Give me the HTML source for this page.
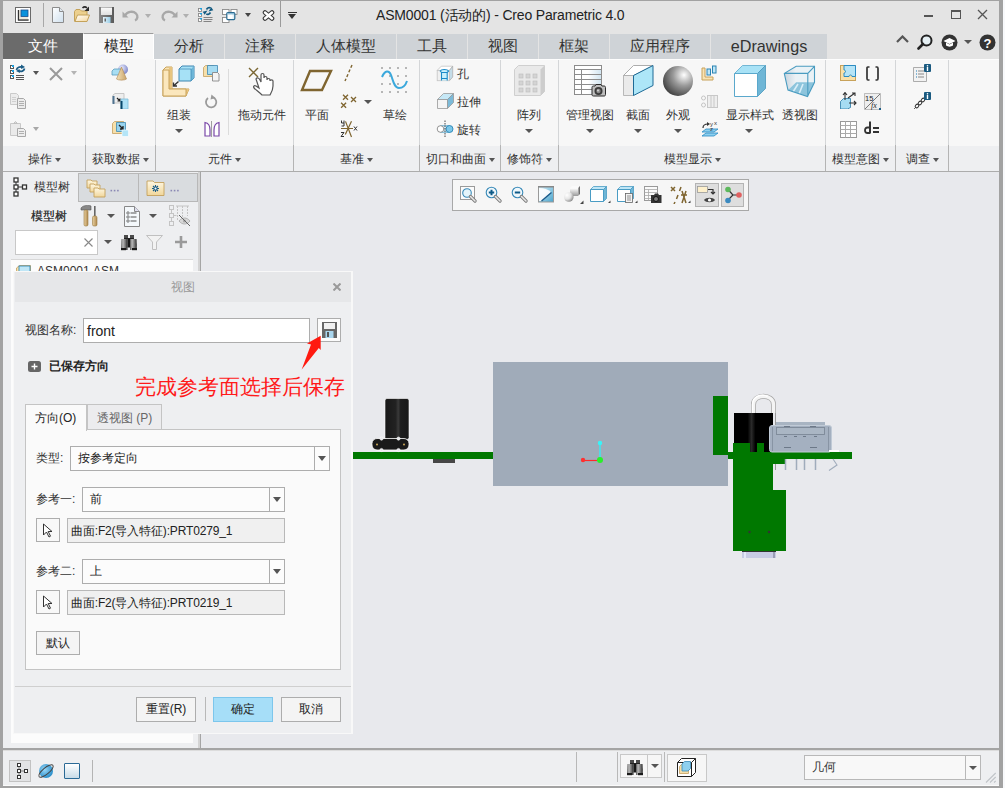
<!DOCTYPE html>
<html><head><meta charset="utf-8">
<style>
*{box-sizing:border-box;margin:0;padding:0}
html,body{width:1005px;height:788px;overflow:hidden;background:#f8f9fb;font-family:"Liberation Sans",sans-serif;font-size:13px;color:#222}
.a{position:absolute}
#frame{position:absolute;left:0;top:0;width:1003px;height:788px;background:#a2a2a2}
#title{left:3px;top:1px;width:996px;height:58px;background:#e4e4e4}
#tabs{left:0;top:0;width:0;height:0}
.tab{position:absolute;top:34px;height:25px;background:#cfd3d7;text-align:center;font-size:15px;line-height:24px;color:#333;border-right:1px solid #e4e4e4}
#ribbon{left:3px;top:59px;width:996px;height:112px;background:#f7f7f7}
#rlabels{left:3px;top:146px;width:996px;height:25px;background:#eeeff1}
.gsep{position:absolute;top:60px;width:1px;height:111px;background:linear-gradient(#d4d6d8 0,#d4d6d8 77%,#b4b4b4 77%,#b4b4b4 100%)}
.glab{position:absolute;top:147px;height:25px;line-height:24px;font-size:12px;color:#333;text-align:center}
.arr{display:inline-block;width:0;height:0;border-left:3.5px solid transparent;border-right:3.5px solid transparent;border-top:4px solid #555;vertical-align:middle;margin-left:3px}
.rl{position:absolute;font-size:12.5px;color:#333;white-space:nowrap}
#panel{left:3px;top:172px;width:195px;height:576px;background:#eeeff1}
#gfx{left:201px;top:172px;width:798px;height:576px;background:#e8e9ed}
#status{left:3px;top:751px;width:996px;height:35px;background:#eeeff1}
#dlg{left:13px;top:271px;width:340px;height:463px;background:#eeeff1;border:1px solid #f8f8f8;border-right-width:2px}

.inp{position:absolute;background:#fff;border:1px solid #adadad}
.sel{position:absolute;background:#fcfcfc;border:1px solid #adadad}
.sel .dd{position:absolute;right:0;top:0;width:15px;height:100%;border-left:1px solid #adadad}
.sel .dd:after{content:"";position:absolute;left:3px;top:9px;border-left:4px solid transparent;border-right:4px solid transparent;border-top:5px solid #555}
.btn{position:absolute;background:#f4f4f4;border:1px solid #adadad;text-align:center;font-size:12px;line-height:22px;color:#222}
.dl{position:absolute;font-size:12px;color:#333;white-space:nowrap}
</style></head><body>
<div id="frame"></div>
<div id="title" class="a"></div><div class="a" style="left:0;top:0">
 <svg class="a" style="left:15px;top:7px" width="16" height="16" viewBox="0 0 16 16"><rect x="0.5" y="0.5" width="15" height="15" fill="#fff" stroke="#6a6a6a"/><path d="M3.5 3v10h10" fill="none" stroke="#333" stroke-width="1.2"/><rect x="4" y="3" width="9" height="9.5" fill="#ece8de"/><rect x="6" y="3" width="7" height="6.5" fill="#0a92dc" stroke="#1a4c8a" stroke-width="0.8"/><path d="M3.5 3v10h10" fill="none" stroke="#333" stroke-width="1.2"/></svg>
 <div class="a" style="left:43px;top:3px;width:1px;height:24px;background:#a8a8a8"></div>
 <svg class="a" style="left:49px;top:6px" width="16" height="17" viewBox="0 0 16 17"><defs><linearGradient id="gdoc" x1="0" y1="0" x2="1" y2="1"><stop offset="0" stop-color="#fff"/><stop offset="1" stop-color="#cfe0ee"/></linearGradient></defs><path d="M3.5 1.5h7l4 4v11h-11z" fill="url(#gdoc)" stroke="#8c8c8c"/><path d="M10.5 1.5v4h4" fill="#dfe8f0" stroke="#8c8c8c"/></svg>
 <svg class="a" style="left:70px;top:3px" width="24" height="22" viewBox="70 3 24 22"><defs><linearGradient id="gflap" x1="0" y1="0" x2="1" y2="1"><stop offset="0" stop-color="#fff"/><stop offset="1" stop-color="#f4d69a"/></linearGradient></defs>
<path d="M74.5 21.5V11.5l1.5-2h4l1.5 1.5h5.5v4" fill="#ecd08e" stroke="#c4a25a" stroke-width="1"/>
<path d="M75 21.5l2.5-6.5h12l-2.5 6.5z" fill="url(#gflap)" stroke="#c4a25a" stroke-width="1"/>
<path d="M82.5 8c1.5-1.5 3-1.5 4.5 0" fill="none" stroke="#2a2a2a" stroke-width="1.6"/>
<path d="M89 6.5v4.5h-4.5z" fill="#2a2a2a"/></svg>
 <svg class="a" style="left:98px;top:6px" width="17" height="18" viewBox="98 6 17 18"><defs><linearGradient id="gsvf" x1="0" x2="1"><stop offset="0" stop-color="#8a8a8a"/><stop offset="1" stop-color="#5a5a5a"/></linearGradient><linearGradient id="gsvl" x1="0" y1="0" x2="0" y2="1"><stop offset="0" stop-color="#fafafa"/><stop offset="1" stop-color="#e0e0e0"/></linearGradient><linearGradient id="gsvs" x1="0" x2="1"><stop offset="0" stop-color="#e8f4fa"/><stop offset="1" stop-color="#98cce6"/></linearGradient></defs>
<rect x="99" y="7" width="15" height="16" fill="url(#gsvf)"/>
<rect x="101" y="7.5" width="11" height="7.5" fill="url(#gsvl)"/>
<rect x="103" y="17" width="7.5" height="6" fill="url(#gsvs)"/>
<rect x="104.5" y="18.5" width="1.5" height="3" fill="#666"/></svg>
 <svg class="a" style="left:122px;top:9px" width="18" height="13" viewBox="0 0 18 13"><path d="M3 6.5c2-4 8-5 11-2 2.5 2.5 1.5 6-1 7" fill="none" stroke="#a8a8a8" stroke-width="2.4"/><path d="M0.5 2.5v6h6z" fill="#a8a8a8"/></svg>
 <div class="a arr" style="left:145px;top:14px;border-top-color:#b0b0b0;margin:0"></div>
 <svg class="a" style="left:160px;top:9px" width="18" height="13" viewBox="0 0 18 13"><path d="M15 6.5c-2-4-8-5-11-2-2.5 2.5-1.5 6 1 7" fill="none" stroke="#a8a8a8" stroke-width="2.4"/><path d="M17.5 2.5v6h-6z" fill="#a8a8a8"/></svg>
 <div class="a arr" style="left:183px;top:14px;border-top-color:#b0b0b0;margin:0"></div>
 <svg class="a" style="left:194px;top:4px" width="22" height="22" viewBox="194 4 22 22"><g fill="#fff" stroke="#8a8a8a" stroke-width="0.9"><rect x="198.5" y="8.5" width="3" height="3"/><rect x="198.5" y="13.5" width="3" height="3"/><rect x="198.5" y="18.5" width="3" height="3"/></g><g fill="#1aa0e0"><rect x="200" y="8" width="2" height="1.5"/><rect x="200" y="13" width="2" height="1.5"/><rect x="200" y="18" width="2" height="1.5"/></g>
<path d="M203.5 17.5h9M203.5 19.5h9M203.5 21.5h8" stroke="#777" stroke-width="0.9"/>
<path d="M206.5 9.5c1-1.8 2.8-2.3 4.2-1.5" fill="none" stroke="#125a80" stroke-width="1.6"/><path d="M213.3 10.2l-4.8 1.3 2.8-4.3z" fill="#125a80"/>
<path d="M210.5 12.5c-1 1.8-2.8 2.3-4.2 1.5" fill="none" stroke="#125a80" stroke-width="1.6"/><path d="M202.7 11.8l4.8-1.3-2.8 4.3z" fill="#125a80"/></svg>
 <svg class="a" style="left:220px;top:6px" width="20" height="19" viewBox="220 6 20 19"><defs><linearGradient id="gwin" x1="0" x2="1"><stop offset="0" stop-color="#fff"/><stop offset="0.6" stop-color="#fff"/><stop offset="1" stop-color="#cfe6f2"/></linearGradient></defs><g fill="#fff" stroke="#8a8a8a" stroke-width="0.9"><rect x="222.5" y="9.5" width="6.5" height="5"/><rect x="231" y="9.5" width="6" height="5"/><rect x="222.5" y="17.5" width="6.5" height="5"/></g><rect x="226.8" y="12.6" width="8" height="7" rx="1" fill="url(#gwin)" stroke="#2a6a90" stroke-width="1.2"/><rect x="227.4" y="13.2" width="6.8" height="1.2" fill="#7ab4d4"/></svg>
 <div class="a arr" style="left:245px;top:13px;margin:0;border-top-color:#444"></div>
 <svg class="a" style="left:262px;top:10px" width="13" height="11" viewBox="0 0 13 11"><path d="M3 2.5l7 6M10 2.5l-7 6" stroke="#3a3a3a" stroke-width="4.6" stroke-linecap="round"/><path d="M3 2.5l7 6M10 2.5l-7 6" stroke="#fff" stroke-width="2.4" stroke-linecap="round"/></svg>
 <div class="a" style="left:280px;top:1px;width:1px;height:26px;background:#9a9a9a"></div>
 <div class="a" style="left:288px;top:12px;width:9px;height:1px;background:#333"></div>
 <div class="a arr" style="left:288px;top:14px;margin:0;border-top-color:#333;border-left-width:4.5px;border-right-width:4.5px;border-top-width:5px"></div>
 <div class="a" id="ttl" style="left:376px;top:7px;font-size:14px;letter-spacing:-0.17px;color:#222;white-space:nowrap">ASM0001 (活动的) - Creo Parametric 4.0</div>
 <div class="a" style="left:924px;top:15px;width:9px;height:2px;background:#555"></div>
 <div class="a" style="left:951px;top:10px;width:10px;height:9px;border:1px solid #555;border-top-width:2px"></div>
 <svg class="a" style="left:977px;top:9px" width="11" height="11" viewBox="0 0 11 11"><path d="M1 1l9 9M10 1L1 10" stroke="#555" stroke-width="1.3"/></svg>
</div>
<div id="tabs" class="a">
  <div class="tab" style="left:3px;width:80px;top:33px;height:26px;line-height:25px;background:#6b6b6b;color:#fff;border:none">文件</div>
  <div class="tab" style="left:83px;width:71px;background:#f8f8f8;color:#222;border-top:1px solid #9c9c9c;top:33px;height:26px;border-left:1px solid #fff;border-right:1px solid #fff">模型</div>
  <div class="tab" style="left:154px;width:71px;">分析</div>
  <div class="tab" style="left:225px;width:71px;">注释</div>
  <div class="tab" style="left:296px;width:101px;">人体模型</div>
  <div class="tab" style="left:397px;width:71px;">工具</div>
  <div class="tab" style="left:468px;width:71px;">视图</div>
  <div class="tab" style="left:539px;width:71px;">框架</div>
  <div class="tab" style="left:610px;width:101px;">应用程序</div>
  <div class="tab" style="left:711px;width:117px;font-size:16.2px">eDrawings</div>
</div>
<!-- tabbar right icons -->
<svg class="a" style="left:896px;top:35px" width="13" height="8" viewBox="0 0 13 8"><path d="M1 7l5.5-5.5L12 7" fill="none" stroke="#555" stroke-width="2.2"/></svg>
<svg class="a" style="left:917px;top:34px" width="16" height="16" viewBox="0 0 16 16"><circle cx="9.5" cy="6.5" r="5" fill="#e6f0f4" stroke="#222" stroke-width="2"/><path d="M6 10l-4.5 4.5" stroke="#222" stroke-width="2.6" stroke-linecap="round"/></svg>
<svg class="a" style="left:941px;top:34px" width="17" height="17" viewBox="0 0 17 17"><circle cx="8.5" cy="8.5" r="8" fill="#333"/><path d="M2.5 7l6-3 6 3-6 3z" fill="#fff"/><path d="M5 8.5v3c2 1.5 5 1.5 7 0v-3l-3.5 2z" fill="#fff"/></svg>
<div class="a arr" style="left:964px;top:40px;margin:0;border-left-width:4px;border-right-width:4px;border-top:4px solid #555"></div>
<svg class="a" style="left:979px;top:34px" width="17" height="17" viewBox="0 0 17 17"><circle cx="8.5" cy="8.5" r="8" fill="#333"/><text x="8.5" y="13.5" text-anchor="middle" font-size="13" font-weight="bold" fill="#fff" font-family="Liberation Sans">?</text></svg>
<div id="ribbon" class="a"></div>
<div id="rlabels" class="a"></div>
<div class="a" style="left:3px;top:171px;width:996px;height:2px;background:#acacac"></div>
<div class="a" style="left:3px;top:59px;width:80px;height:1px;background:#fff"></div>
<div class="a" style="left:154px;top:59px;width:845px;height:1px;background:#fdfdfd"></div>
<div class="gsep" style="left:85px"></div>
<div class="gsep" style="left:155px"></div>
<div class="gsep" style="left:293px"></div>
<div class="gsep" style="left:419px"></div>
<div class="gsep" style="left:500px"></div>
<div class="gsep" style="left:558px"></div>
<div class="gsep" style="left:825px"></div>
<div class="gsep" style="left:895px"></div>
<div class="gsep" style="left:948px"></div>
<div class="a" style="left:228px;top:69px;width:1px;height:66px;background:#dcdcdc"></div>
<div class="glab" style="left:3px;width:82px">操作<span class="arr"></span></div>
<div class="glab" style="left:86px;width:69px">获取数据<span class="arr"></span></div>
<div class="glab" style="left:156px;width:137px">元件<span class="arr"></span></div>
<div class="glab" style="left:294px;width:125px">基准<span class="arr"></span></div>
<div class="glab" style="left:420px;width:80px">切口和曲面<span class="arr"></span></div>
<div class="glab" style="left:501px;width:57px">修饰符<span class="arr"></span></div>
<div class="glab" style="left:559px;width:266px">模型显示<span class="arr"></span></div>
<div class="glab" style="left:826px;width:69px">模型意图<span class="arr"></span></div>
<div class="glab" style="left:896px;width:52px">调查<span class="arr"></span></div>
<!-- group 操作 -->
<svg class="a" style="left:10px;top:64px" width="17" height="17" viewBox="0 0 17 17"><g fill="#fff" stroke="#555" stroke-width="1"><rect x="0.5" y="1.5" width="3" height="3"/><rect x="0.5" y="6.5" width="3" height="3"/><rect x="0.5" y="11.5" width="3" height="3"/></g><g fill="#1aa0e0"><rect x="2" y="1" width="2" height="2"/><rect x="2" y="6" width="2" height="2"/><rect x="2" y="11" width="2" height="2"/></g><path d="M6 11.5h8M6 13.5h8M6 15.5h8" stroke="#555" stroke-width="1"/><path d="M6.5 6c0.5-2.5 3.5-4 6-2.5" fill="none" stroke="#1a5c86" stroke-width="1.8"/><path d="M11 0.5l4 2.5-3.8 2z" fill="#1a5c86"/><path d="M14.5 4.5c-0.5 2.5-3.5 3.5-5.5 2.3" fill="none" stroke="#1a5c86" stroke-width="1.8"/><path d="M10 9l-4-2 3.5-2z" fill="#1a5c86"/></svg>
<div class="a arr" style="left:33px;top:71px;margin:0;border-left-width:3.5px;border-right-width:3.5px;border-top:4px solid #555"></div>
<svg class="a" style="left:48px;top:66px" width="16" height="16" viewBox="0 0 16 16"><path d="M2 2l12 12M14 2L2 14" stroke="#9a9a9a" stroke-width="2"/></svg>
<div class="a arr" style="left:71px;top:71px;margin:0;border-left-width:3.5px;border-right-width:3.5px;border-top:4px solid #b4b4b4"></div>
<svg class="a" style="left:10px;top:93px" width="17" height="17" viewBox="0 0 17 17"><path d="M0.5 0.5h6l2 2v9h-8z" fill="#ececec" stroke="#cacaca"/><path d="M2 4.5h4M2 6.5h4M2 8.5h4" stroke="#d0d0d0"/><path d="M7.5 5.5h6l2 2v8h-8z" fill="#ececec" stroke="#a8a8a8"/><path d="M9 8.5h5M9 10.5h5M9 12.5h5" stroke="#b0b0b0"/></svg>
<svg class="a" style="left:10px;top:121px" width="17" height="17" viewBox="0 0 17 17"><path d="M0.5 2.5h10v12h-10z" fill="#eaeaea" stroke="#c8c8c8"/><path d="M3.5 2.5l2-2 2 2z" fill="#ddd" stroke="#c0c0c0"/><path d="M7.5 7.5h6l2 2v6h-8z" fill="#eee" stroke="#a8a8a8"/><path d="M9 10.5h5M9 12.5h5" stroke="#b0b0b0"/></svg>
<div class="a arr" style="left:33px;top:127px;margin:0;border-left-width:3.5px;border-right-width:3.5px;border-top:4px solid #a8a8a8"></div>
<!-- group 获取数据 -->
<svg class="a" style="left:111px;top:64px" width="18" height="17" viewBox="0 0 18 17"><defs><radialGradient id="gsph" cx="0.35" cy="0.35" r="0.7"><stop offset="0" stop-color="#eef0ff"/><stop offset="1" stop-color="#7d86c8"/></radialGradient><linearGradient id="gcone" x1="0" x2="1"><stop offset="0" stop-color="#f5e2b8"/><stop offset="1" stop-color="#c9a46a"/></linearGradient></defs><circle cx="12" cy="5.5" r="5" fill="url(#gsph)"/><path d="M1 7l2-2h8v6H1z" fill="#a8def3" stroke="#5a9dbd" stroke-width="0.8"/><path d="M10.5 3l-5 12c2 1.5 8 1.5 10 0z" fill="url(#gcone)" stroke="#b08850" stroke-width="0.6"/></svg>
<svg class="a" style="left:112px;top:93px" width="17" height="16" viewBox="0 0 17 16"><path d="M1 2l2-1.5h9v9.5h-11z" fill="#eee" stroke="#bbb" stroke-width="0.8"/><rect x="0.5" y="3" width="2" height="8" fill="#4f7390"/><path d="M5 5l3 3M8 5.5v2.5h-2.5" stroke="#222" stroke-width="1.2" fill="none"/><path d="M9 6h7v10H9z" fill="#aee0f5" stroke="#7dbcd8" stroke-width="0.8"/><rect x="8.5" y="8" width="2" height="8" fill="#07466a"/></svg>
<svg class="a" style="left:112px;top:121px" width="17" height="16" viewBox="0 0 17 16"><path d="M0.5 2.5l2-2h9v12h-11z" fill="#f6dfaa" stroke="#c4a060" stroke-width="0.8"/><path d="M4.5 1.5h9v9h-9z" fill="#98d3ee" stroke="#3f8ab0" stroke-width="0.8"/><path d="M7 4l4 4M11 5v3H8" stroke="#222" stroke-width="1.3" fill="none"/><path d="M10 9h6.5v6.5H10z" fill="#b5e5f7" stroke="#fff" stroke-width="0.6"/></svg>

<!-- group 元件 -->
<svg class="a" style="left:162px;top:65px" width="33" height="33" viewBox="0 0 33 33"><path d="M1 5l3-3h6v22h17l-3 7H1z" fill="#f9e3b4" stroke="#c8a25a" stroke-width="1"/><path d="M7 2l3 0v22l-3 3z" fill="#e8c47e"/><path d="M24 24h3l-3 7z" fill="#e8c47e"/><path d="M1 5h6v19h17v7H1z" fill="#fbe7bd" stroke="#c8a25a" stroke-width="1"/><path d="M17 4l3-3h12v12l-3 3H17z" fill="#a6e1f6" stroke="#3e86b2" stroke-width="1"/><path d="M29 4l3-3v12l-3 3z" fill="#6eb6d8"/><path d="M17 4h12v12" fill="none" stroke="#3e86b2" stroke-width="0.7"/><path d="M16.5 16.5l-5 4.5M11.5 17.5v3.5h3.5" stroke="#333" stroke-width="1.4" fill="none"/></svg>
<div class="rl" style="left:167px;top:107px;font-size:12px">组装</div>
<div class="a arr" style="left:175px;top:129px;margin:0;border-left-width:4px;border-right-width:4px;border-top:4px solid #555"></div>
<svg class="a" style="left:203px;top:65px" width="17" height="17" viewBox="0 0 17 17"><path d="M0.5 2.5l2-2h8v11h-10z" fill="#f6dfaa" stroke="#c4a060" stroke-width="0.8"/><path d="M4.5 0.5h10v9h-10z" fill="#a6dcf2" stroke="#3e86b2" stroke-width="0.8"/><path d="M9.5 7.5h5l1.5 1.5v7h-6.5z" fill="#f4f4f4" stroke="#888" stroke-width="0.9"/></svg>
<svg class="a" style="left:204px;top:94px" width="14" height="15" viewBox="0 0 14 15"><path d="M4 4a5.2 5.2 0 1 0 5.5-0.5" fill="none" stroke="#9a9a9a" stroke-width="1.8"/><path d="M7.5 0.5l4 3.5-5 1.5z" fill="#9a9a9a"/></svg>
<svg class="a" style="left:204px;top:121px" width="16" height="16" viewBox="0 0 16 16"><path d="M7.5 0v16" stroke="#888" stroke-width="0.8"/><path d="M1 15V1.5C4 2 6 5 6 9v6z" fill="#fff" stroke="#7a48a8" stroke-width="1.2"/><path d="M15 15V1.5C12 2 10 5 10 9v6z" fill="#fff" stroke="#7a48a8" stroke-width="1.2"/></svg>
<svg class="a" style="left:247px;top:67px" width="30" height="30" viewBox="0 0 30 30"><path d="M2 1l9 9M11 1L2 10" stroke="#7a6632" stroke-width="1.4"/><path d="M9 12c1-2 3-1 4 1l1 2V8c0-2 3-2 3 0v3c0-2 3-2 3 0v2c0-2 3-2 3 0v1c0-1.5 3-1.5 3 0v5c0 4-2 7-3 9H15c-3-3-6-5-8-7-1-1.5 0-3 2-2l3 2z" fill="#fff" stroke="#555" stroke-width="1.2"/></svg>
<div class="rl" style="left:238px;top:107px;font-size:12px">拖动元件</div>
<!-- group 基准 -->
<svg class="a" style="left:300px;top:69px" width="33" height="23" viewBox="0 0 33 23"><path d="M10 2h21L22 21H2z" fill="none" stroke="#7f6530" stroke-width="2.4"/></svg>
<div class="rl" style="left:305px;top:107px;font-size:12px">平面</div>
<svg class="a" style="left:344px;top:64px" width="9" height="18" viewBox="0 0 9 18"><path d="M8 1L1 17" stroke="#7f6530" stroke-width="1.4" stroke-dasharray="3 2"/></svg>
<svg class="a" style="left:336px;top:90px" width="24" height="20" viewBox="336 90 24 20"><g stroke="#7f6530" stroke-width="1.3"><path d="M343 94.8l5 5M348 94.8l-5 5"/><path d="M351 97l5 5M356 97l-5 5"/><path d="M341.1 102.7l5 5M346.1 102.7l-5 5"/></g></svg>
<div class="a arr" style="left:364px;top:100px;margin:0;border-left-width:4px;border-right-width:4px;border-top:4px solid #555"></div>
<svg class="a" style="left:336px;top:118px" width="24" height="22" viewBox="336 118 24 22"><g stroke="#7f6530" stroke-width="1.2"><path d="M341 128.5h12M345.5 121.4l6 15.6M351.5 121.2l-6.2 13.2"/></g>
<g fill="none" stroke="#333" stroke-width="1"><path d="M341.5 120.5v2.5h2.5M344 120.5v5.5h-2.5"/><path d="M341 132.5h3l-3 4h3"/><path d="M354 126.5l3 4M357 126.5l-3 4"/></g></svg>
<svg class="a" style="left:381px;top:67px" width="28" height="27" viewBox="0 0 28 27"><g fill="#444"><circle cx="1" cy="1" r="0.7"/><circle cx="9" cy="1" r="0.7"/><circle cx="17" cy="1" r="0.7"/><circle cx="25" cy="1" r="0.7"/><circle cx="9" cy="9" r="0.7"/><circle cx="17" cy="9" r="0.7"/><circle cx="25" cy="9" r="0.7"/><circle cx="1" cy="17" r="0.7"/><circle cx="9" cy="17" r="0.7"/><circle cx="17" cy="17" r="0.7"/><circle cx="1" cy="25" r="0.7"/><circle cx="9" cy="25" r="0.7"/><circle cx="17" cy="25" r="0.7"/><circle cx="25" cy="25" r="0.7"/></g><path d="M1 10c3-7 7-7 9-2s3 13 8 13 7-4 8-7" fill="none" stroke="#3aa8dc" stroke-width="2"/></svg>
<div class="rl" style="left:383px;top:107px;font-size:12px">草绘</div>
<!-- group 切口和曲面 -->
<svg class="a" style="left:434px;top:62px" width="24" height="22" viewBox="434 62 24 22">
<path d="M437.2 70.4L441.3 66.2H452.7L449.5 70.4z" fill="#fff" stroke="#c4c4c4" stroke-width="0.8"/>
<path d="M449.5 70.4L452.7 66.2V77L449.5 80.7z" fill="#c4dce8" stroke="#b0b0b0" stroke-width="0.8"/>
<rect x="437.2" y="70.4" width="12.3" height="10.3" fill="#f0f0f0" stroke="#c4c4c4" stroke-width="0.8"/>
<path d="M441.5 80.5V72.5l-1.3-1.5c1-2 7-2 8.5 0l-1.5 1.5v8M441.5 78.5h5.3M441.5 72.5h5.3" fill="#c8f0fc" stroke="#1a8ac8" stroke-width="1.1"/>
</svg>
<div class="rl" style="left:457px;top:66px;font-size:12px">孔</div>
<svg class="a" style="left:437px;top:93px" width="17" height="16" viewBox="0 0 17 16"><path d="M0.5 6.5h10v9h-10z" fill="#f4f4f4" stroke="#999" stroke-width="0.8"/><path d="M0.5 6.5l6-6h10l-6 6z" fill="#c6e8f6" stroke="#999" stroke-width="0.8"/><path d="M10.5 6.5l6-6v9l-6 6z" fill="#7cbad8" stroke="#999" stroke-width="0.8"/></svg>
<div class="rl" style="left:457px;top:94px;font-size:12px">拉伸</div>
<svg class="a" style="left:436px;top:120px" width="18" height="18" viewBox="0 0 18 18"><path d="M4.5 5.5h9v7h-9z" fill="#cfeaf6" stroke="#7ab8d4" stroke-width="0.8"/><circle cx="4.5" cy="9" r="3.3" fill="#fff" stroke="#888" stroke-width="0.9"/><circle cx="13.5" cy="9" r="3.5" fill="#7cc8ea" stroke="#2a84b4" stroke-width="0.9"/><path d="M9 0.5v17" stroke="#333" stroke-width="0.9" stroke-dasharray="1.5 1"/></svg>
<div class="rl" style="left:457px;top:122px;font-size:12px">旋转</div>
<!-- group 修饰符 -->
<svg class="a" style="left:514px;top:65px" width="31" height="31" viewBox="0 0 31 31"><path d="M0.5 4.5l4-4h26v26l-4 4h-26z" fill="#e9e9e9" stroke="#cfcfcf"/><path d="M26.5 4.5l4-4v26l-4 4z" fill="#cdcdcd"/><g fill="#d4d4d4" stroke="#bdbdbd" stroke-width="0.6"><rect x="5" y="9" width="4" height="4"/><rect x="12" y="9" width="4" height="4"/><rect x="19" y="9" width="4" height="4"/><rect x="5" y="16" width="4" height="4"/><rect x="12" y="16" width="4" height="4"/><rect x="19" y="16" width="4" height="4"/><rect x="5" y="23" width="4" height="4"/><rect x="12" y="23" width="4" height="4"/><rect x="19" y="23" width="4" height="4"/></g></svg>
<div class="rl" style="left:517px;top:107px;font-size:12px">阵列</div>
<div class="a arr" style="left:525px;top:129px;margin:0;border-left-width:4px;border-right-width:4px;border-top:4px solid #555"></div>
<!-- group 模型显示 -->
<svg class="a" style="left:570px;top:62px" width="40" height="38" viewBox="570 62 40 38"><defs><linearGradient id="gtab" x1="0" x2="1"><stop offset="0" stop-color="#fff"/><stop offset="0.5" stop-color="#fff"/><stop offset="1" stop-color="#d0e4f0"/></linearGradient></defs>
<rect x="574.5" y="65.5" width="27" height="29" fill="url(#gtab)" stroke="#8c8c8c"/><rect x="575" y="66" width="26" height="3.5" fill="#fff"/>
<path d="M574.5 69.5h27M574.5 74.5h27M574.5 79.5h27M574.5 84.5h27M574.5 89.5h27M581.5 69.5v25" stroke="#8c8c8c"/>
<path d="M592 87.5c0-1 .5-1.5 1.5-1.5h1.5l1-1.5h5l1 1.5h2c1 0 1.5.5 1.5 1.5v7c0 1-.5 1.5-1.5 1.5h-10.5c-1 0-1.5-.5-1.5-1.5z" fill="#bdbdbd" stroke="#2a2a2a" stroke-width="1"/>
<circle cx="598.5" cy="91" r="4" fill="#3a3a3a"/><circle cx="598.5" cy="91" r="2.2" fill="#8a8a8a"/><circle cx="598" cy="90.5" r="0.9" fill="#ddd"/>
</svg>
<div class="rl" style="left:566px;top:107px;font-size:12px">管理视图</div>
<div class="a arr" style="left:586px;top:129px;margin:0;border-left-width:4px;border-right-width:4px;border-top:4px solid #555"></div>
<svg class="a" style="left:623px;top:65px" width="31" height="32" viewBox="0 0 31 32"><path d="M0.5 10.5l10-10h19.5l-19.5 10z" fill="#fff" stroke="#999" stroke-width="0.8"/><path d="M0.5 10.5h10v20h-10z" fill="#eaeaea" stroke="#aaa" stroke-width="0.8"/><path d="M10.5 10.5l19.5-10v20l-19.5 10z" fill="#ade6f8" stroke="#1e6a96" stroke-width="1"/></svg>
<div class="rl" style="left:626px;top:107px;font-size:12px">截面</div>
<div class="a arr" style="left:634px;top:129px;margin:0;border-left-width:4px;border-right-width:4px;border-top:4px solid #555"></div>
<svg class="a" style="left:662px;top:65px" width="32" height="32" viewBox="0 0 32 32"><defs><radialGradient id="gball" cx="0.7" cy="0.3" r="0.8"><stop offset="0" stop-color="#fff"/><stop offset="0.45" stop-color="#9a9a9a"/><stop offset="1" stop-color="#3c3c3c"/></radialGradient></defs><circle cx="16" cy="16" r="15" fill="url(#gball)"/></svg>
<div class="rl" style="left:666px;top:107px;font-size:12px">外观</div>
<div class="a arr" style="left:674px;top:129px;margin:0;border-left-width:4px;border-right-width:4px;border-top:4px solid #555"></div>
<svg class="a" style="left:701px;top:65px" width="17" height="17" viewBox="0 0 17 17"><path d="M1 3v12h11v-3H4V3z" fill="#f9e3b4" stroke="#c8a25a" stroke-width="1"/><rect x="6" y="4" width="3.5" height="6" fill="#bfe6f6" stroke="#2a84b4"/><rect x="11.5" y="1" width="3.5" height="7" fill="#bfe6f6" stroke="#2a84b4"/></svg>
<svg class="a" style="left:701px;top:95px" width="17" height="13" viewBox="0 0 17 13"><circle cx="2.5" cy="3" r="2" fill="none" stroke="#c4c4c4"/><circle cx="2.5" cy="10" r="2" fill="none" stroke="#c4c4c4"/><rect x="6.5" y="0.5" width="10" height="12" fill="#eee" stroke="#c8c8c8"/><path d="M10 1v11M13 1v11" stroke="#c8c8c8"/></svg>
<svg class="a" style="left:701px;top:120px" width="18" height="18" viewBox="0 0 18 18"><path d="M1 12l4-3h12l-4 3zM1 16l4-3h12l-4 3z" fill="#8ccfee" stroke="#2a8cc4" stroke-width="0.8"/><path d="M2 8c0-3 2-4 5-4" fill="none" stroke="#333" stroke-width="1.2"/><path d="M6 2l3 2-3 2z" fill="#333"/><text x="9" y="6" font-size="6" fill="#333" font-family="Liberation Sans">y</text><text x="13" y="5" font-size="6" fill="#333" font-family="Liberation Sans">x</text><text x="9" y="11" font-size="6" fill="#333" font-family="Liberation Sans">z</text></svg>
<svg class="a" style="left:734px;top:65px" width="32" height="32" viewBox="0 0 32 32"><path d="M0.5 8.5l8-8h23l-8 8z" fill="#a8e2f6" stroke="#5aa8cc" stroke-width="0.8"/><path d="M23.5 8.5l8-8v23l-8 8z" fill="#6fb6d6" stroke="#4a98bc" stroke-width="0.8"/><path d="M0.5 8.5h23v23h-23z" fill="#fff" stroke="#5aa8cc" stroke-width="1"/></svg>
<div class="rl" style="left:726px;top:107px;font-size:12px">显示样式</div>
<div class="a arr" style="left:745px;top:129px;margin:0;border-left-width:4px;border-right-width:4px;border-top:4px solid #555"></div>
<svg class="a" style="left:780px;top:62px" width="40" height="38" viewBox="780 62 40 38"><defs><linearGradient id="gpw" x1="0" x2="1"><stop offset="0" stop-color="#c8d4de"/><stop offset="1" stop-color="#eef3f6"/></linearGradient></defs>
<path d="M784.3 73.4L796.2 66.3H814.5V82.3L807.5 96.5 788 90z" fill="#eaf2f6"/>
<path d="M784.3 73.4L796.2 66.3V82.3L788 90z" fill="url(#gpw)"/>
<path d="M796.2 82.3H814.5L807.5 96.5 788 90z" fill="#8cc4dc"/>
<path d="M798 84l-5 8M803 84l-4 10" stroke="#d8eef8" stroke-width="1.6"/>
<path d="M784.3 73.4L796.2 66.3H814.5V82.3L807.5 96.5 788 90z M784.3 73.4H807.8L814.5 66.3 M807.8 73.4V96.5" fill="none" stroke="#4a9cc0" stroke-width="1.1"/>
</svg>
<div class="rl" style="left:782px;top:107px;font-size:12px">透视图</div>
<!-- group 模型意图 -->
<svg class="a" style="left:840px;top:65px" width="16" height="16" viewBox="0 0 16 16"><rect x="0.5" y="0.5" width="15" height="15" fill="#f9e0a8" stroke="#c8a25a"/><path d="M4 0.5h11.5v11H12c0-2-3-2-3 0v0H4V8c2 0 2-3 0-3z" fill="#b6e4f6" stroke="#2a8cc4" stroke-width="1"/></svg>
<svg class="a" style="left:865px;top:66px" width="15" height="15" viewBox="0 0 15 15"><path d="M4.5 1H3C2 1 2 1.5 2 2.5v10c0 1 0 1.5 1 1.5h1.5M10.5 1H12c1 0 1 .5 1 1.5v10c0 1 0 1.5-1 1.5h-1.5" fill="none" stroke="#333" stroke-width="1.7"/></svg>
<svg class="a" style="left:840px;top:92px" width="17" height="17" viewBox="0 0 17 17"><path d="M0.5 9.5l3-3h7v9l-3 1.5h-7z" fill="#a6dcf2" stroke="#2a78a6" stroke-width="0.8"/><path d="M5 8V1M3 3l2-2.5L7 3M8 6l7-5M12 1h3v3M9 11h7M14 9l2 2-2 2" fill="none" stroke="#333" stroke-width="1.1"/></svg>
<svg class="a" style="left:864px;top:93px" width="17" height="17" viewBox="0 0 17 17"><path d="M0.5 0.5h16v16h-16z" fill="#eee" stroke="#999" stroke-width="0.6"/><path d="M16 1L1 16" stroke="#777"/><text x="1" y="7.5" font-size="7.5" fill="#222" font-family="Liberation Sans">15</text><text x="7" y="15" font-size="8" fill="#222" font-style="italic" font-family="Liberation Serif">fx</text><rect x="15" y="15" width="2" height="2" fill="#1a5c86"/></svg>
<svg class="a" style="left:840px;top:121px" width="17" height="17" viewBox="0 0 17 17"><rect x="0.5" y="0.5" width="16" height="16" fill="#fff" stroke="#999"/><path d="M0.5 4.5h16M0.5 8.5h16M0.5 12.5h16M5.5 0.5v16M10.5 0.5v16" stroke="#aaa"/></svg>
<svg class="a" style="left:864px;top:121px" width="16" height="13" viewBox="0 0 16 13"><path d="M6 0.5v12" stroke="#333" stroke-width="2"/><path d="M6 6.5H3.5C2 6.5 1 7.5 1 9.2S2 12 3.5 12H6" fill="none" stroke="#333" stroke-width="1.8"/><path d="M9 7h6M9 11h6" stroke="#333" stroke-width="1.8"/></svg>
<!-- group 调查 -->
<svg class="a" style="left:913px;top:64px" width="18" height="18" viewBox="0 0 18 18"><path d="M0.5 3.5h11l2 2v12h-13z" fill="#f2f2f2" stroke="#999" stroke-width="0.8"/><path d="M3 7h1M3 10h1M3 13h1" stroke="#1a7ab8"/><path d="M5 7h6M5 10h6M5 13h6" stroke="#888"/><rect x="11" y="0" width="7" height="8" rx="1" fill="#1a5a80"/><path d="M14.5 3v4" stroke="#fff" stroke-width="1.4"/><circle cx="14.5" cy="1.7" r="0.8" fill="#fff"/></svg>
<svg class="a" style="left:913px;top:92px" width="18" height="18" viewBox="0 0 18 18"><path d="M1 17l10-10" stroke="#666" stroke-width="1"/><g fill="#fff" stroke="#333" stroke-width="1"><ellipse cx="4" cy="14" rx="2" ry="1.5" transform="rotate(-45 4 14)"/><ellipse cx="7" cy="11" rx="2" ry="1.5" transform="rotate(-45 7 11)"/><ellipse cx="10" cy="8" rx="2" ry="1.5" transform="rotate(-45 10 8)"/></g><rect x="11" y="0" width="7" height="8" rx="1" fill="#1a5a80"/><path d="M14.5 3v4" stroke="#fff" stroke-width="1.4"/><circle cx="14.5" cy="1.7" r="0.8" fill="#fff"/></svg>
<div id="panel" class="a"></div>
<div class="a" style="left:198px;top:172px;width:2px;height:576px;background:#d4d4d4"></div>
<div class="a" style="left:200px;top:172px;width:1px;height:576px;background:#a5a5a5"></div>
<div class="a" style="left:78px;top:173px;width:61px;height:29px;background:#d9dcdf;border:1px solid #b8b8b8"></div>
<div class="a" style="left:138px;top:173px;width:60px;height:29px;background:#d9dcdf;border:1px solid #b8b8b8"></div>
<svg class="a" style="left:13px;top:177px" width="15" height="20" viewBox="0 0 15 20"><g fill="#fff" stroke="#333" stroke-width="1.3"><rect x="1" y="1" width="4" height="4"/><rect x="1" y="8" width="4" height="4"/><rect x="1" y="15" width="4" height="4"/><rect x="9.5" y="8" width="4" height="4"/></g><path d="M3 5v3M3 12v3M5 10h4.5" stroke="#333" stroke-width="1"/></svg>
<div class="rl" style="left:34px;top:179px;font-size:12px">模型树</div>
<svg class="a" style="left:86px;top:177px" width="21" height="21" viewBox="0 0 21 21"><defs><linearGradient id="gfold" x1="0" y1="0" x2="0" y2="1"><stop offset="0" stop-color="#fff8e4"/><stop offset="1" stop-color="#f0d69a"/></linearGradient></defs><g fill="url(#gfold)" stroke="#c4a05c" stroke-width="0.9"><path d="M1 3h4l1 1h5v7H1z"/><path d="M4 7h4l1 1h5v7H4z"/><path d="M8 11h4l1 1h6v8H8z"/></g></svg>
<svg class="a" style="left:110px;top:189px" width="10" height="3" viewBox="0 0 10 3"><g fill="#8a88b4"><rect x="0.5" y="0.8" width="1.6" height="1.6"/><rect x="3.8" y="0.8" width="1.6" height="1.6"/><rect x="7.1" y="0.8" width="1.6" height="1.6"/></g></svg>
<svg class="a" style="left:146px;top:179px" width="19" height="17" viewBox="0 0 19 17"><path d="M1 2h6l1.5 1.5h9.5v13h-17z" fill="url(#gfold)" stroke="#c4a05c" stroke-width="0.9"/><g stroke="#1a5c86" stroke-width="1.1"><path d="M9.5 6v7M6 9.5h7M7 7l5 5M12 7l-5 5"/></g><circle cx="9.5" cy="9.5" r="1.5" fill="#fff" stroke="#1a5c86"/></svg>
<svg class="a" style="left:170px;top:189px" width="10" height="3" viewBox="0 0 10 3"><g fill="#8a88b4"><rect x="0.5" y="0.8" width="1.6" height="1.6"/><rect x="3.8" y="0.8" width="1.6" height="1.6"/><rect x="7.1" y="0.8" width="1.6" height="1.6"/></g></svg>
<div class="rl" style="left:31px;top:208px;font-size:12px;font-weight:500;text-shadow:0.3px 0 0 #555">模型树</div>
<svg class="a" style="left:80px;top:205px" width="19" height="22" viewBox="0 0 19 22"><defs><linearGradient id="gham" x1="0" x2="1"><stop offset="0" stop-color="#e8d0a0"/><stop offset="1" stop-color="#b08a50"/></linearGradient></defs><path d="M1 3c2-3 8-3 10-2v4H1z" fill="#888" stroke="#555" stroke-width="0.6"/><rect x="4" y="5" width="4" height="16" rx="1.5" fill="url(#gham)" stroke="#9a7a40" stroke-width="0.6"/><rect x="14" y="1" width="1.6" height="10" fill="#666"/><rect x="12.5" y="11" width="4.5" height="10" rx="1.5" fill="url(#gham)" stroke="#9a7a40" stroke-width="0.6"/></svg>
<div class="a arr" style="left:107px;top:214px;margin:0;border-left-width:4px;border-right-width:4px;border-top:4px solid #555"></div>
<svg class="a" style="left:124px;top:206px" width="16" height="21" viewBox="0 0 16 21"><path d="M0.5 0.5h10l5 5v15h-15z" fill="#f4f8fb" stroke="#888"/><path d="M10.5 0.5v5h5" fill="#dde" stroke="#888"/><g fill="none" stroke="#555" stroke-width="0.8"><circle cx="4" cy="7" r="1.2"/><circle cx="4" cy="11" r="1.2"/><circle cx="4" cy="15" r="1.2"/></g><path d="M6.5 7h6M6.5 11h6M6.5 15h6" stroke="#555"/></svg>
<div class="a arr" style="left:149px;top:214px;margin:0;border-left-width:4px;border-right-width:4px;border-top:4px solid #555"></div>
<svg class="a" style="left:169px;top:205px" width="22" height="22" viewBox="0 0 22 22"><g fill="none" stroke="#c4c4c4" stroke-width="1"><rect x="0.5" y="0.5" width="4" height="4"/><rect x="0.5" y="8.5" width="4" height="4"/><rect x="0.5" y="16.5" width="4" height="4"/><path d="M2.5 4.5v4M2.5 12.5v4M4.5 10.5h3"/><path d="M8.5 1v15M13.5 1v12M18.5 1v10" stroke-dasharray="2 1"/><path d="M7 1h13"/></g><path d="M10 16c3-4 8-4 11 0-3 4-8 4-11 0z" fill="#d8d8d8" stroke="#b4b4b4"/><circle cx="15.5" cy="16" r="1.6" fill="#aaa"/><path d="M10 10l11 11" stroke="#666" stroke-width="1"/></svg>
<div class="a" style="left:15px;top:230px;width:83px;height:25px;background:#fff;border:1px solid #c8c8c8"></div>
<svg class="a" style="left:84px;top:238px" width="9" height="9" viewBox="0 0 9 9"><path d="M0.5 0.5l8 8M8.5 0.5l-8 8" stroke="#888" stroke-width="1.1"/></svg>
<div class="a arr" style="left:104px;top:240px;margin:0;border-left-width:4px;border-right-width:4px;border-top:4px solid #555"></div>
<svg class="a" style="left:118px;top:233px" width="20" height="18" viewBox="0 0 20 18"><defs><linearGradient id="gbin" x1="0" x2="1"><stop offset="0" stop-color="#555"/><stop offset="0.3" stop-color="#bbb"/><stop offset="0.75" stop-color="#666"/><stop offset="1" stop-color="#222"/></linearGradient></defs><rect x="6" y="2" width="4" height="3.5" fill="#4a4a4a"/><rect x="12" y="2" width="4" height="3.5" fill="#4a4a4a"/><rect x="6" y="5" width="10" height="1" fill="#222"/><path d="M3.5 6h6v11H3l0.2-5z" fill="url(#gbin)"/><path d="M12 6h6.5l0.3 6-0.1 5H12z" fill="url(#gbin)"/><rect x="9.5" y="6" width="2.5" height="8.5" fill="#161616"/><rect x="3" y="15" width="5" height="2.2" fill="#1a1a1a"/><rect x="14" y="15" width="5" height="2.2" fill="#1a1a1a"/></svg>
<svg class="a" style="left:146px;top:235px" width="17" height="15" viewBox="0 0 17 15"><path d="M0.5 0.5h16l-6 6.5v7.5h-4V7z" fill="#f2f2f2" stroke="#c0c0c0"/></svg>
<svg class="a" style="left:175px;top:236px" width="12" height="12" viewBox="0 0 12 12"><path d="M6 0v12M0 6h12" stroke="#9a9a9a" stroke-width="2.6"/></svg>
<div class="a" style="left:11px;top:259px;width:182px;height:484px;background:#fcfcfc;border-top:1px solid #d8d8d8"></div>
<svg class="a" style="left:16px;top:265px" width="15" height="10" viewBox="0 0 15 10"><path d="M0.5 3l3-2.5h11v9.5h-14z" fill="#f6dfaa" stroke="#c4a060" stroke-width="0.8"/><rect x="3" y="1" width="11" height="9" fill="#bfe6f6" stroke="#2a84b4" stroke-width="0.8"/></svg>
<div class="rl" style="left:37px;top:264px;font-size:12px;color:#333">ASM0001.ASM</div>

<div id="gfx" class="a"></div>
<div class="a" style="left:452px;top:179px;width:297px;height:32px;background:#f6f6f6;border:1px solid #a8a8a8"></div>
<svg class="a" style="left:460px;top:186px" width="17" height="17" viewBox="0 0 17 17"><rect x="0.5" y="0.5" width="14" height="13" fill="#fbfbfb" stroke="#9a9a9a"/><circle cx="7" cy="7" r="4.3" fill="#e4f4fa" stroke="#3a8ab8" stroke-width="1.1"/><path d="M10.5 10.5l4.5 4.5" stroke="#777" stroke-width="3.2" stroke-linecap="round"/><path d="M10.5 10.5l4.5 4.5" stroke="#e8e8e8" stroke-width="1.6" stroke-linecap="round"/></svg>
<svg class="a" style="left:485px;top:186px" width="17" height="17" viewBox="0 0 17 17"><circle cx="6.5" cy="6.5" r="5.3" fill="#f0f8fc" stroke="#3a8ab8" stroke-width="1.1"/><path d="M6.5 3.8v5.4M3.8 6.5h5.4" stroke="#0e5a88" stroke-width="2"/><path d="M10.5 10.5l4.5 4.5" stroke="#777" stroke-width="3.2" stroke-linecap="round"/><path d="M10.5 10.5l4.5 4.5" stroke="#e8e8e8" stroke-width="1.6" stroke-linecap="round"/></svg>
<svg class="a" style="left:511px;top:186px" width="17" height="17" viewBox="0 0 17 17"><circle cx="6.5" cy="6.5" r="5.3" fill="#f0f8fc" stroke="#3a8ab8" stroke-width="1.1"/><path d="M3.8 6.5h5.4" stroke="#0e5a88" stroke-width="2"/><path d="M10.5 10.5l4.5 4.5" stroke="#777" stroke-width="3.2" stroke-linecap="round"/><path d="M10.5 10.5l4.5 4.5" stroke="#e8e8e8" stroke-width="1.6" stroke-linecap="round"/></svg>
<svg class="a" style="left:538px;top:186px" width="16" height="17" viewBox="0 0 16 17"><defs><linearGradient id="gref" x1="0" y1="0" x2="1" y2="1"><stop offset="0" stop-color="#d8f0fa"/><stop offset="1" stop-color="#4aa4cc"/></linearGradient></defs><rect x="0.5" y="0.5" width="15" height="15.5" fill="url(#gref)" stroke="#9a9a9a"/><rect x="0" y="0" width="16" height="1.5" fill="#888"/><path d="M1 2c5 0 9 1.5 12 4L4 15H1z" fill="#fff" opacity="0.9"/><path d="M3.5 15L13.5 6.5" stroke="#1a5a8a" stroke-width="1.4"/></svg>
<svg class="a" style="left:560px;top:182px" width="30" height="26" viewBox="560 182 30 26"><defs><radialGradient id="gsp2" cx="0.3" cy="0.3" r="0.85"><stop offset="0" stop-color="#fff"/><stop offset="0.5" stop-color="#e4e4e4"/><stop offset="1" stop-color="#777"/></radialGradient><linearGradient id="gcf" x1="0" y1="0" x2="0" y2="1"><stop offset="0" stop-color="#fff"/><stop offset="1" stop-color="#9a9a9a"/></linearGradient><linearGradient id="gcr" x1="0" y1="0" x2="1" y2="0"><stop offset="0" stop-color="#bbb"/><stop offset="1" stop-color="#555"/></linearGradient></defs>
<path d="M570 188l2-2h8v8l-2 2z" fill="#fafafa"/><rect x="570" y="188" width="8" height="8" fill="url(#gcf)"/><path d="M578 188l2-2v8l-2 2z" fill="url(#gcr)"/>
<circle cx="568.8" cy="197" r="4.8" fill="url(#gsp2)"/>
<path d="M580 204h3.5v-3.5z" fill="#444"/></svg>
<svg class="a" style="left:590px;top:186px" width="21" height="18" viewBox="0 0 21 18"><path d="M0.5 3.5l3-3h13l-3 3z" fill="#bfe6f6" stroke="#4a9cc4" stroke-width="0.8"/><path d="M13.5 3.5l3-3v12l-3 3z" fill="#6fb6d6" stroke="#4a9cc4" stroke-width="0.8"/><path d="M0.5 3.5h13v12h-13z" fill="#fff" stroke="#4a9cc4"/><path d="M18 17h2.5v-2.5z" fill="#444"/></svg>
<svg class="a" style="left:617px;top:186px" width="21" height="18" viewBox="0 0 21 18"><path d="M0.5 3.5l3-3h13l-3 3z" fill="#bfe6f6" stroke="#4a9cc4" stroke-width="0.8"/><path d="M13.5 3.5l3-3v12l-3 3z" fill="#6fb6d6" stroke="#4a9cc4" stroke-width="0.8"/><path d="M0.5 3.5h13v12h-13z" fill="#fff" stroke="#4a9cc4"/><rect x="8.5" y="7.5" width="7" height="9" fill="#f4f4f4" stroke="#666" stroke-width="0.8"/><path d="M10 10h4M10 12h4M10 14h4" stroke="#666" stroke-width="0.7"/><path d="M18 17h2.5v-2.5z" fill="#444"/></svg>
<svg class="a" style="left:644px;top:186px" width="18" height="17" viewBox="0 0 18 17"><rect x="0.5" y="0.5" width="13" height="14" fill="#fafafa" stroke="#999"/><path d="M0.5 3.5h13M0.5 6.5h13M0.5 9.5h13M0.5 12.5h13M4.5 3.5v11" stroke="#aaa" stroke-width="0.8"/><path d="M7 9h3l1-1.5h3l1 1.5h2.5v8H7z" fill="#333"/><circle cx="12" cy="13" r="2.5" fill="#777" stroke="#111"/></svg>
<svg class="a" style="left:670px;top:186px" width="21" height="18" viewBox="0 0 21 18"><g stroke="#7f6530" stroke-width="1.5"><path d="M1 1l4 4M5 1L1 5"/><path d="M11 1l-1.5 4M8 9l-1.5 4M5 16l-1 2"/><path d="M11 9h6M12 5l4 12M16 5l-4 12"/></g><path d="M18 17h2.5v-2.5z" fill="#444"/></svg>
<div class="a" style="left:695px;top:183px;width:24px;height:24px;background:#dedede;border:1px solid #b4b4b4"></div>
<svg class="a" style="left:697px;top:186px" width="20" height="18" viewBox="0 0 20 18"><rect x="0.5" y="0.5" width="10" height="6" fill="#fdf0cc" stroke="#999" stroke-width="0.8"/><path d="M11 3.5h5v4M14 6l2 2 2-2" fill="none" stroke="#333" stroke-width="1.2"/><path d="M7 14c2-3 9-3 11 0-2 3-9 3-11 0z" fill="#444"/><circle cx="12.5" cy="14" r="1.6" fill="#fff"/></svg>
<div class="a" style="left:721px;top:183px;width:23px;height:24px;background:#dedede;border:1px solid #b4b4b4"></div>
<svg class="a" style="left:724px;top:186px" width="18" height="18" viewBox="0 0 18 18"><path d="M4 3.5l5 5.5-5 5M9 9h6" fill="none" stroke="#333" stroke-width="1.2"/><circle cx="4" cy="3.5" r="2.8" fill="#5cb85c"/><circle cx="15" cy="9" r="2.8" fill="#e06060"/><circle cx="4" cy="14.5" r="2.8" fill="#3a8ac0"/></svg>

<!-- model -->
<svg class="a" style="left:340px;top:350px" width="530" height="220" viewBox="340 350 530 220">
<defs><linearGradient id="gcyl" x1="0" x2="1"><stop offset="0" stop-color="#181818"/><stop offset="0.45" stop-color="#222"/><stop offset="0.55" stop-color="#3a3a3a"/><stop offset="0.65" stop-color="#1e1e1e"/><stop offset="1" stop-color="#181818"/></linearGradient>
<linearGradient id="gblk" x1="0" x2="1"><stop offset="0" stop-color="#000"/><stop offset="0.35" stop-color="#000"/><stop offset="0.45" stop-color="#2a2a2a"/><stop offset="0.55" stop-color="#000"/><stop offset="1" stop-color="#000"/></linearGradient></defs>
<rect x="353" y="452" width="140" height="7" fill="#007800"/>
<rect x="433" y="459" width="22" height="4" fill="#464646"/>
<rect x="385" y="398.5" width="24" height="41" rx="2" fill="url(#gcyl)" stroke="#fff" stroke-width="0.6"/>
<rect x="372" y="438.5" width="37" height="11.5" rx="5" fill="#1a1a1a" stroke="#fff" stroke-width="0.8"/>
<circle cx="377" cy="444.5" r="0.9" fill="#e0b860"/><circle cx="404" cy="444.5" r="0.9" fill="#e0b860"/><g fill="#e8e9ed" stroke="#fff" stroke-width="0.6"><circle cx="381.5" cy="438.6" r="1.6"/><circle cx="398.5" cy="438.6" r="1.6"/><circle cx="381.5" cy="450" r="1.6"/><circle cx="398.5" cy="450" r="1.6"/></g>
<rect x="493" y="362" width="235" height="124" fill="#a0abb9"/>
<path d="M583 460.5h14" stroke="#ff2a2a" stroke-width="1.2"/>
<path d="M600 443v15" stroke="#30f0f8" stroke-width="1.3"/>
<circle cx="583" cy="460" r="2.2" fill="#ff3030"/>
<circle cx="600" cy="443" r="2.2" fill="#38f4f8"/>
<circle cx="600" cy="460" r="3" fill="#28f028"/>
<rect x="713" y="396" width="15" height="59" fill="#007800"/>
<path d="M753.5 413V404.5c0-11 20-11 20 0V413" fill="none" stroke="#a8a8a8" stroke-width="5"/>
<path d="M753.5 413V404.5c0-11 20-11 20 0V413" fill="none" stroke="#f4f4f4" stroke-width="3.4"/>
<path d="M752.5 413V404.5c0-9 10-11 15-8" fill="none" stroke="#fff" stroke-width="1.4"/>
<path d="M775.5 413v57" stroke="#9a9a9a" stroke-width="1"/>
<rect x="734" y="413" width="39" height="39" fill="url(#gblk)"/>
<rect x="728" y="452" width="124" height="7" fill="#007800"/>
<rect x="733" y="443" width="17" height="108" fill="#007800"/>
<rect x="757" y="443" width="7" height="108" fill="#007800"/>
<rect x="750" y="452" width="23" height="99" fill="#007800"/>
<rect x="773" y="452" width="13" height="12" fill="#007800"/>
<rect x="773" y="490" width="13" height="61" fill="#007800"/>
<circle cx="749.5" cy="532" r="1.2" fill="#333"/><circle cx="769" cy="532" r="1.2" fill="#333"/>
<rect x="742" y="551" width="34" height="7" fill="#c8cce4"/>
<rect x="742" y="551" width="34" height="1" fill="#333"/>
<rect x="744" y="552" width="2" height="6" fill="#e4e8f8"/><rect x="773" y="552" width="2" height="6" fill="#9a9eb4"/>
<rect x="776" y="422" width="49" height="4" fill="#a8b4c2"/>
<rect x="769.5" y="425.5" width="62" height="26.5" rx="2.5" fill="#a4b0c0" stroke="#c0cad6" stroke-width="1"/>
<rect x="776.5" y="427.5" width="48" height="7" fill="#aab6c4" stroke="#7c8898" stroke-width="0.9"/>
<path d="M772.5 427v24M828.5 427v24" stroke="#8894a4" stroke-width="1"/>
<g fill="#6c7888"><rect x="784" y="426" width="6" height="1"/><rect x="810" y="426" width="6" height="1"/><rect x="784" y="436" width="3" height="1"/><rect x="794" y="436" width="3" height="1"/><rect x="803" y="436" width="3" height="1"/><rect x="814" y="436" width="3" height="1"/><rect x="784" y="447" width="7" height="1"/><rect x="810" y="447" width="7" height="1"/></g>
<rect x="829" y="450" width="10" height="2" fill="#fff"/>
<g stroke="#a0acbc" stroke-width="1.5"><path d="M785.5 459v11M796.5 459v11M804.5 459v11M815.5 459v11"/><path d="M833 459l4 6-8 5.5" fill="none" stroke-width="1.1"/></g>
</svg>
<div id="status" class="a"></div>
<div class="a" style="left:3px;top:748px;width:996px;height:2px;background:#a4a4a4"></div>
<div class="a" style="left:3px;top:750px;width:996px;height:1px;background:#dcdcdc"></div>
<div class="a" style="left:9px;top:760px;width:22px;height:22px;background:#e2e3e5;border:1px solid #c2c2c2"></div>
<svg class="a" style="left:15px;top:762px" width="16" height="18" viewBox="15 762 16 18"><path d="M19 767v2.5M19 773v2.5M21 771h3.5" stroke="#666" stroke-width="0.8"/><g fill="#fff" stroke="#333" stroke-width="1"><rect x="17.5" y="763.5" width="3" height="3"/><rect x="17.5" y="769.5" width="3" height="3"/><rect x="17.5" y="775.5" width="3" height="3"/><rect x="24.5" y="769.5" width="3" height="3"/></g></svg>
<svg class="a" style="left:37px;top:762px" width="18" height="18" viewBox="0 0 18 18"><defs><radialGradient id="gglb" cx="0.4" cy="0.4" r="0.7"><stop offset="0" stop-color="#9ad8f8"/><stop offset="1" stop-color="#1a84c4"/></radialGradient></defs><circle cx="9" cy="9" r="7" fill="url(#gglb)"/><ellipse cx="9" cy="9" rx="9" ry="3.2" transform="rotate(-40 9 9)" fill="none" stroke="#444" stroke-width="1"/></svg>
<div class="a" style="left:64px;top:763px;width:16px;height:16px;border:1px solid #2a6a96;border-radius:1px;background:linear-gradient(#fff,#c8dce8)"></div>
<div class="a" style="left:92px;top:760px;width:1px;height:22px;background:#b4b4b4"></div>
<div class="a" style="left:576px;top:752px;width:1px;height:30px;background:#b8b8b8"></div>
<div class="a" style="left:617px;top:752px;width:1px;height:30px;background:#b8b8b8"></div>
<div class="a" style="left:664px;top:752px;width:1px;height:30px;background:#b8b8b8"></div>
<div class="a" style="left:620px;top:754px;width:42px;height:24px;background:#f6f6f6;border:1px solid #c8c8c8"></div>
<div class="a" style="left:647px;top:755px;width:1px;height:22px;background:#c8c8c8"></div>
<svg class="a" style="left:624px;top:758px" width="20" height="18" viewBox="0 0 20 18"><rect x="6" y="2" width="4" height="3.5" fill="#4a4a4a"/><rect x="12" y="2" width="4" height="3.5" fill="#4a4a4a"/><rect x="6" y="5" width="10" height="1" fill="#222"/><path d="M3.5 6h6v11H3l0.2-5z" fill="url(#gbin)"/><path d="M12 6h6.5l0.3 6-0.1 5H12z" fill="url(#gbin)"/><rect x="9.5" y="6" width="2.5" height="8.5" fill="#161616"/><rect x="3" y="15" width="5" height="2.2" fill="#1a1a1a"/><rect x="14" y="15" width="5" height="2.2" fill="#1a1a1a"/></svg>
<div class="a arr" style="left:651px;top:764px;margin:0;border-left-width:4px;border-right-width:4px;border-top:4px solid #555"></div>
<div class="a" style="left:667px;top:754px;width:40px;height:28px;background:#f6f6f6;border:1px solid #c8c8c8"></div>
<svg class="a" style="left:677px;top:758px" width="20" height="20" viewBox="0 0 20 20"><path d="M0.5 4.5l4-4h14v14l-4 4h-14z" fill="#fff" stroke="#222" stroke-width="1"/><path d="M0.5 4.5h14v14M14.5 4.5l4-4" fill="none" stroke="#222" stroke-width="1"/><path d="M2.5 8.5l2-2h7v9h-9z" fill="#f6dfaa" stroke="#c4a060" stroke-width="0.8"/><path d="M5 6l2.5-2.5h6v7l-2.5 2.5H5z" fill="#8fd0ee" stroke="#3a8ab8" stroke-width="0.8"/></svg>
<div class="a" style="left:804px;top:755px;width:177px;height:25px;background:#f8f8f8;border:1px solid #b8b8b8"></div>
<div class="a" style="left:965px;top:756px;width:1px;height:23px;background:#b8b8b8"></div>
<div class="dl" style="left:812px;top:759px;color:#333">几何</div>
<div class="a arr" style="left:969px;top:766px;margin:0;border-left-width:4px;border-right-width:4px;border-top:4px solid #555"></div>
<svg class="a" style="left:985px;top:772px" width="12" height="12" viewBox="985 772 12 12"><path d="M986 782.5L995.7 773M990 782.5L995.7 777M994 782.5l1.7-1.5" stroke="#c0c4c8" stroke-width="1.1"/></svg>
<div class="a" style="left:3px;top:785px;width:996px;height:1px;background:#fafafa"></div>

<div id="dlg" class="a"></div>
<div class="a" style="left:15px;top:272px;width:336px;height:30px;background:#e6e7e9"></div>
<div class="dl" style="left:171px;top:279px;color:#999">视图</div>
<svg class="a" style="left:333px;top:283px" width="8" height="8" viewBox="0 0 8 8"><path d="M0.5 0.5l7 7M7.5 0.5l-7 7" stroke="#9a9a9a" stroke-width="2"/></svg>
<div class="dl" style="left:25px;top:322px">视图名称:</div>
<div class="inp" style="left:83px;top:318px;width:227px;height:25px"></div>
<div class="dl" style="left:87px;top:323px;font-size:14px;color:#222">front</div>
<div class="btn" style="left:317px;top:318px;width:24px;height:24px;background:#fbfbfb"></div>
<svg class="a" style="left:322px;top:322px" width="15" height="16" viewBox="0 0 15 16"><path d="M0 0h15v16H0z" fill="#666"/><path d="M2 1h11v6H2z" fill="#f0f0f0"/><path d="M3.5 9h8v7h-8z" fill="#a9d6ee"/><path d="M5 10h2v5H5z" fill="#555"/></svg>
<svg class="a" style="left:28px;top:361px" width="13" height="11" viewBox="0 0 13 11"><rect x="0" y="0" width="13" height="11" rx="2.5" fill="#666"/><path d="M6.5 2.5v6M3.5 5.5h6" stroke="#fff" stroke-width="1.4"/></svg>
<div class="dl" style="left:49px;top:358px;font-weight:bold;color:#222">已保存方向</div>
<div class="a" style="left:135px;top:373px;font-size:21px;color:#ff1a1a;white-space:nowrap">完成参考面选择后保存</div>
<svg class="a" style="left:295px;top:330px" width="30" height="45" viewBox="295 330 30 45"><path d="M320.7 335.8L307 343.4 311 344.5 301.7 369.4 318.8 348 320.7 350z" fill="#ff1a10"/></svg>
<div class="a" style="left:25px;top:429px;width:316px;height:241px;background:#fafafa;border:1px solid #c4c4c4"></div>
<div class="a" style="left:87px;top:404px;width:75px;height:26px;background:#ececee;border:1px solid #c4c4c4"></div>
<div class="a" style="left:25px;top:404px;width:62px;height:27px;background:#fafafa;border:1px solid #c4c4c4;border-bottom:none"></div>
<div class="dl" style="left:35px;top:410px;color:#222">方向(O)</div>
<div class="dl" style="left:97px;top:410px;color:#666">透视图 (P)</div>
<div class="dl" style="left:36px;top:450px">类型:</div>
<div class="sel" style="left:70px;top:446px;width:260px;height:25px"><div class="dd"></div></div>
<div class="dl" style="left:78px;top:450px;color:#222">按参考定向</div>
<div class="dl" style="left:36px;top:491px">参考一:</div>
<div class="sel" style="left:82px;top:487px;width:203px;height:25px"><div class="dd"></div></div>
<div class="dl" style="left:90px;top:491px;color:#222">前</div>
<div class="btn" style="left:36px;top:518px;width:24px;height:24px;background:#f8f8f8"></div>
<svg class="a" style="left:42px;top:523px" width="12" height="15" viewBox="0 0 12 15"><path d="M1.5 1v11l3-3 2.5 5 1.5-0.8-2.3-4.7H10z" fill="#fff" stroke="#333" stroke-width="1"/></svg>
<div class="a" style="left:67px;top:518px;width:218px;height:25px;background:#f0f0f0;border:1px solid #b8b8b8"></div>
<div class="dl" style="left:71px;top:523px;color:#222;letter-spacing:-0.15px">曲面:F2(导入特征):PRT0279_1</div>
<div class="dl" style="left:36px;top:563px">参考二:</div>
<div class="sel" style="left:82px;top:559px;width:203px;height:25px"><div class="dd"></div></div>
<div class="dl" style="left:90px;top:563px;color:#222">上</div>
<div class="btn" style="left:36px;top:590px;width:24px;height:24px;background:#f8f8f8"></div>
<svg class="a" style="left:42px;top:595px" width="12" height="15" viewBox="0 0 12 15"><path d="M1.5 1v11l3-3 2.5 5 1.5-0.8-2.3-4.7H10z" fill="#fff" stroke="#333" stroke-width="1"/></svg>
<div class="a" style="left:67px;top:590px;width:218px;height:25px;background:#f0f0f0;border:1px solid #b8b8b8"></div>
<div class="dl" style="left:71px;top:595px;color:#222;letter-spacing:-0.15px">曲面:F2(导入特征):PRT0219_1</div>
<div class="btn" style="left:36px;top:631px;width:44px;height:24px">默认</div>
<div class="a" style="left:15px;top:686px;width:336px;height:1px;background:#cfcfcf"></div>
<div class="btn" style="left:136px;top:697px;width:60px;height:25px">重置(R)</div>
<div class="a" style="left:205px;top:697px;width:1px;height:24px;background:#b8b8b8"></div>
<div class="btn" style="left:213px;top:697px;width:60px;height:25px;background:#a6def8;border-color:#7cc6ec">确定</div>
<div class="btn" style="left:281px;top:697px;width:60px;height:25px">取消</div>

</body></html>
